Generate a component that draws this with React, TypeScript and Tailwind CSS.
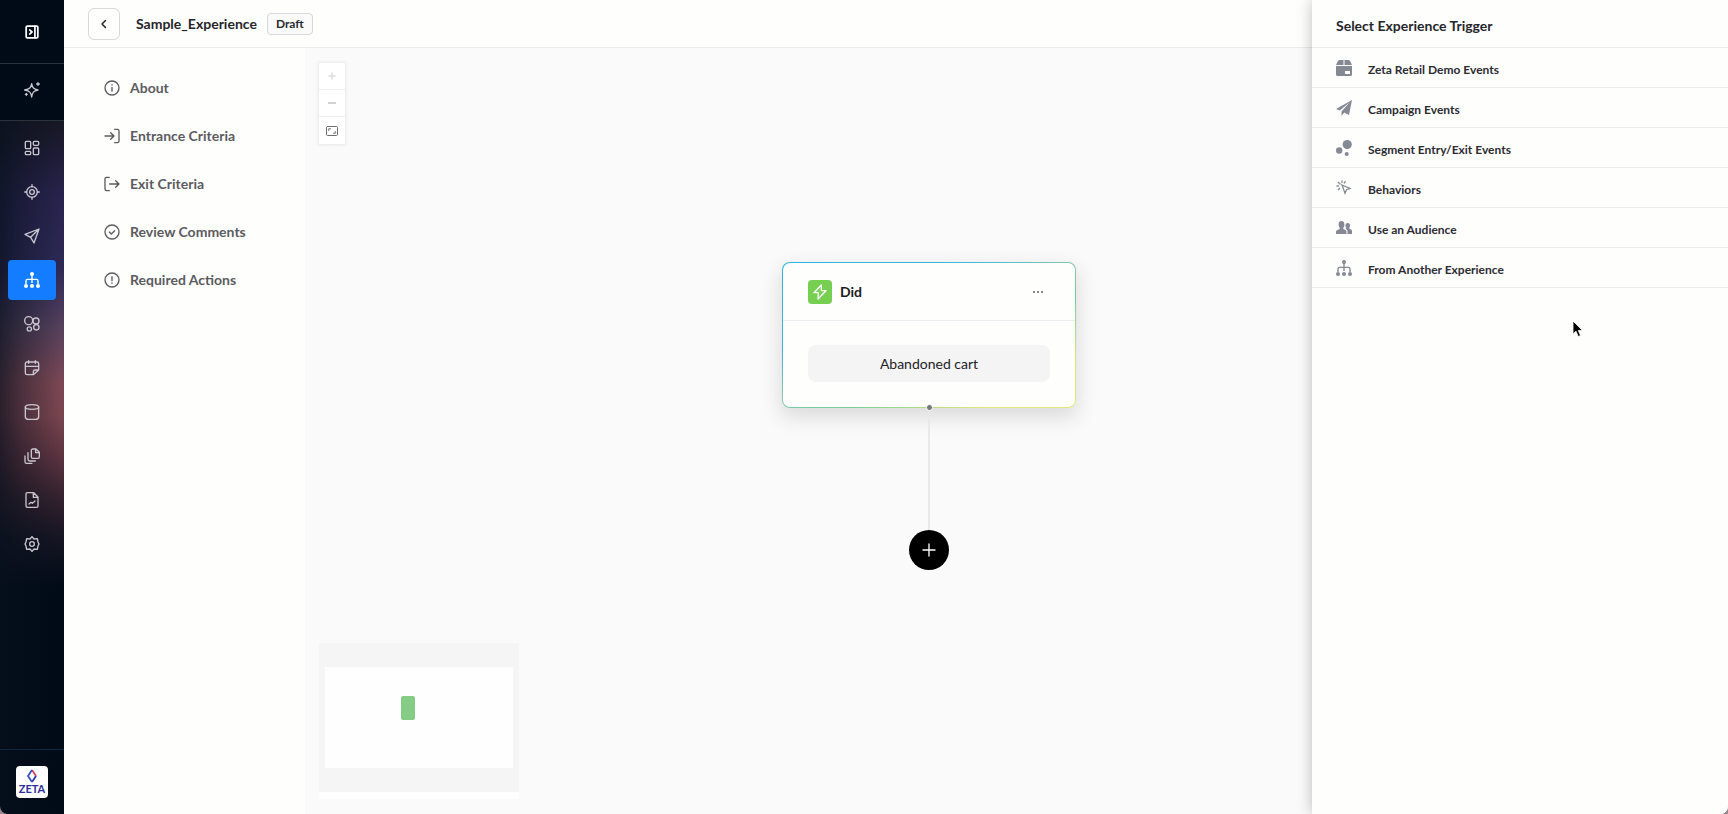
import type { ReactNode } from "react";
import clsx from "clsx";

function StrokeIcon({ children, className = "size-4", width = 1.5 }: { children: ReactNode; className?: string; width?: number }) {
  return (
    <svg viewBox="0 0 24 24" fill="none" stroke="currentColor" strokeWidth={width} strokeLinecap="round" strokeLinejoin="round" className={className} aria-hidden="true">
      {children}
    </svg>
  );
}

function FillIcon({ children, className = "size-4" }: { children: ReactNode; className?: string }) {
  return (
    <svg viewBox="0 0 16 16" fill="currentColor" className={className} aria-hidden="true">
      {children}
    </svg>
  );
}

const sitemap = (
  <>
    <circle cx="8" cy="2" r="2" />
    <path d="M8 3v8M2 12V9q0-1.600 1.600-1.600h8.800q1.600 0 1.600 1.600v3" fill="none" stroke="currentColor" strokeWidth="1.400" />
    <circle cx="2" cy="14" r="2" />
    <circle cx="8" cy="14" r="2" />
    <circle cx="14" cy="14" r="2" />
  </>
);

const railItems = [
  {
    label: "Dashboard",
    icon: (
      <StrokeIcon width={2}>
        <rect x="2" y="2" width="8" height="11" rx="1.500" />
        <rect x="14" y="2" width="8" height="6" rx="1.500" />
        <rect x="2" y="17" width="8" height="5" rx="1.500" />
        <rect x="14" y="12" width="8" height="10" rx="1.500" />
      </StrokeIcon>
    ),
  },
  {
    label: "Audiences",
    icon: (
      <StrokeIcon width={2}>
        <circle cx="12" cy="12" r="8" />
        <circle cx="12" cy="12" r="3.500" />
        <path d="M12 1v3M12 20v3M1 12h3M20 12h3" />
      </StrokeIcon>
    ),
  },
  {
    label: "Campaigns",
    icon: (
      <StrokeIcon width={2}>
        <path d="M22.500 1.500 1.500 9.500l8.500 4.500 5 8.500zM22.500 1.500 10 14" />
      </StrokeIcon>
    ),
  },
  { label: "Experiences", icon: <FillIcon>{sitemap}</FillIcon>, active: true },
  {
    label: "Segments",
    icon: (
      <StrokeIcon width={2}>
        <circle cx="7" cy="7" r="6" />
        <circle cx="18" cy="7.500" r="4.500" />
        <circle cx="18.500" cy="17" r="4" />
        <circle cx="8" cy="19.500" r="3.200" />
      </StrokeIcon>
    ),
  },
  {
    label: "Calendar",
    icon: (
      <StrokeIcon width={2}>
        <path d="M14 22H4.500A2.500 2.500 0 0 1 2 19.500v-14A2.500 2.500 0 0 1 4.500 3h15A2.500 2.500 0 0 1 22 5.500V15zM2 9.500h20M7 1v4M17 1v4M14 22v-4.500a2.500 2.500 0 0 1 2.500-2.500H22" />
      </StrokeIcon>
    ),
  },
  {
    label: "Data",
    icon: (
      <StrokeIcon width={2}>
        <ellipse cx="12" cy="4.500" rx="10" ry="3.500" />
        <path d="M2 4.500V19c0 2 2 4 5 4h10c3 0 5-2 5-4V4.500" />
      </StrokeIcon>
    ),
  },
  {
    label: "Content",
    icon: (
      <StrokeIcon width={2}>
        <path d="M18 1.500h-5a2 2 0 0 0-2 2v10a2 2 0 0 0 2 2h8a2 2 0 0 0 2-2v-7zM17.500 1.500v5.500H23M6 7v10a2.500 2.500 0 0 0 2.500 2.500H17M1.500 12v8.500A2.500 2.500 0 0 0 4 23h8" />
      </StrokeIcon>
    ),
  },
  {
    label: "Reports",
    icon: (
      <StrokeIcon width={2}>
        <path d="M14.500 1H5a2 2 0 0 0-2 2v18a2 2 0 0 0 2 2h14a2 2 0 0 0 2-2V7.500zM14 1v7h7M7.500 18l3-2.500 2 1.500 4-3.500" />
      </StrokeIcon>
    ),
  },
  {
    label: "Settings",
    icon: (
      <StrokeIcon width={2}>
        <path d="m12 1 3 3.500 5-.500 1 5 1.500 3-1.500 3-1 5-5-.500L12 23l-3-3.500-5 .500-1-5L1.500 12 3 9l1-5 5 .500z" />
        <circle cx="12" cy="12" r="3.500" />
      </StrokeIcon>
    ),
  },
];

const sections = [
  { label: "About", icon: <><circle cx="12" cy="12" r="10.500" /><path d="M12 11v6M12 7v.500" /></> },
  { label: "Entrance Criteria", icon: <path d="M1.500 12H15M10 7l5 5-5 5M16 2h4a2.500 2.500 0 0 1 2.500 2.500v15A2.500 2.500 0 0 1 20 22h-4" /> },
  { label: "Exit Criteria", icon: <path d="M8 2H4a2.500 2.500 0 0 0-2.500 2.500v15A2.500 2.500 0 0 0 4 22h4M8.500 12h14M17.500 7l5 5-5 5" /> },
  { label: "Review Comments", icon: <><circle cx="12" cy="12" r="10.500" /><path d="m8 12 3 3 5-5" /></> },
  { label: "Required Actions", icon: <><circle cx="12" cy="12" r="10.500" /><path d="M12 7v6M12 16.500v.500" /></> },
];

const triggers = [
  {
    label: "Zeta Retail Demo Events",
    icon: <path d="M3.500 0h4v5H0l1.800-3.800A2 2 0 0 1 3.500 0zM8.500 0h4a2 2 0 0 1 1.700 1.200L16 5H8.500zM0 6h16v8.500a1.500 1.500 0 0 1-1.500 1.500h-13A1.500 1.500 0 0 1 0 14.500zM9 11v3h5v-3z" fillRule="evenodd" />,
  },
  { label: "Campaign Events", icon: <path d="M16 0 0 9l3.800 1.600L14 2 5.500 11.500V16l2.700-3.400L13 15z" /> },
  { label: "Segment Entry/Exit Events", icon: <><circle cx="11.200" cy="4.600" r="4.600" /><circle cx="3.200" cy="10.500" r="3.200" /><circle cx="10.700" cy="14" r="2" /></> },
  {
    label: "Behaviors",
    icon: <path d="m6 5 8 3.500-3.500 1.200L9 13.300zM4.500 4.500 2 2M6 3V.500M3 6H.500M8 3.500 9.500 1M4 8l-2 2" fill="none" stroke="currentColor" strokeWidth="1.300" />,
  },
  {
    label: "Use an Audience",
    icon: <path d="M0 14v-2c0-1.500 1-2 2.500-2.500 1-.300 1.300-.600 1.300-1.500C3 7 2.600 6 2.600 4.500 2.600 2.500 3.500 1 5.500 1s2.900 1.500 2.900 3.500C8.400 6 8 7 7.200 8c0 .900.300 1.200 1.300 1.500 1.500.500 2 1 2 2.500v2zM11.500 14v-2.500c0-1.500-.700-2.300-2-2.800.500-.200.700-.500.700-1C9.700 7 9.500 6.500 9.500 5.500c0-1.700.900-2.500 2.300-2.500S14 3.800 14 5.500c0 1-.200 1.500-.800 2.200 0 .800.200 1 1 1.300 1.300.500 1.800 1 1.800 2.500V14z" />,
  },
  { label: "From Another Experience", icon: sitemap },
];

function Rail() {
  return (
    <aside className="flex w-16 shrink-0 flex-col bg-[linear-gradient(90deg,#07101cb3,#07101c66_35%,#07101c00_95%),linear-gradient(180deg,#171724_15%,#28234d_24%,#2d2956_33%,#54405c_40%,#7b4753_47%,#7a454f_51%,#5c3440_56%,#35222f_61%,#161523_66%,#010b17_72%)] text-[#c8c6d0]">
      <div className="flex h-16 items-center justify-center border-b border-[#2b333d] bg-[#010b17] text-white">
        <button aria-label="Expand menu">
          <StrokeIcon width={3} className="size-3.5">
            <rect x="2" y="2" width="20" height="20" rx="2" />
            <path d="M17 2v20M8 8.500l4 3.500-4 3.500" />
          </StrokeIcon>
        </button>
      </div>
      <div className="flex h-[57px] items-center justify-center border-b border-[#2b333d] bg-[#010b17] pb-1">
        <button aria-label="Assistant">
          <StrokeIcon width={2}>
            <path d="M11.500 2.500c1 6 3 8 9.500 9.500-6.500 1.500-8.500 3.500-9.500 10.500C10.500 15.500 8.500 13.500 1 12c7.500-1.500 9.500-3.500 10.500-9.500zM21 1v4M19 3h4M3.500 17v3M2 18.500h3" />
          </StrokeIcon>
        </button>
      </div>
      <nav className="flex flex-col gap-1 px-2 py-[7px]">
        {railItems.map((item) => (
          <button
            key={item.label}
            aria-label={item.label}
            className={clsx("flex h-10 items-center justify-center rounded", item.active && "bg-[#147dff] text-white")}
          >
            {item.icon}
          </button>
        ))}
      </nav>
      <div className="mt-auto flex h-[65px] items-center justify-center border-t border-[#12263c]">
        <div className="flex size-8 flex-col items-center justify-center rounded bg-white">
          <svg viewBox="0 0 12 14" fill="none" strokeWidth="1.800" className="h-3.5 w-3" aria-hidden="true">
            <path d="m6 1 4 6" stroke="#d9475b" />
            <path d="m10 7-4 6" stroke="#2a3aa8" />
            <path d="M6 13 2 7l4-6" stroke="#3552c4" />
          </svg>
          <span className="text-[11px] leading-3 font-bold text-[#2d2f9b]">ZETA</span>
        </div>
      </div>
    </aside>
  );
}

function ZoomControls() {
  return (
    <div className="absolute top-[15px] left-[14px] flex w-[26px] flex-col divide-y divide-[#eeeef0] bg-white text-[#6c6c70] shadow-[0_0_3px_1px_#00000014]">
      <button aria-label="Zoom in" className="flex h-[27px] items-center justify-center text-[#cfcfd2]">
        <StrokeIcon width={3} className="size-2"><path d="M12 2v20M2 12h20" /></StrokeIcon>
      </button>
      <button aria-label="Zoom out" className="flex h-[27px] items-center justify-center text-[#a5a5a8]">
        <StrokeIcon width={3} className="size-2"><path d="M1 12h22" /></StrokeIcon>
      </button>
      <button aria-label="Fit view" className="flex h-[27px] items-center justify-center">
        <StrokeIcon width={2} className="size-3">
          <rect x="1" y="3" width="22" height="18" rx="2" />
          <path d="M5.500 11V7.500H9M18.500 13v3.500H15" />
        </StrokeIcon>
      </button>
    </div>
  );
}

function TriggerNode() {
  return (
    <div className="absolute top-[214px] left-[477px] flex w-[294px] flex-col items-center">
      <div className="w-full rounded-lg bg-[linear-gradient(155deg,#2cb3e0_0%,#3db6d8_30%,#86c5b0_48%,#74cf98_62%,#e2e878_85%)] p-px shadow-[0_8px_20px_2px_#0000001f]">
        <div className="rounded-[7px] bg-[#fefefd]">
          <div className="flex h-[58px] items-center gap-2 border-b border-[#eeeef2] px-[25px]">
            <span className="flex size-6 items-center justify-center rounded bg-[#76cf50] text-white">
              <StrokeIcon width={2}>
                <path d="M14 1.500 3 13h6.500L9 22.500 21 10h-7z" />
              </StrokeIcon>
            </span>
            <h2 className="text-sm font-bold text-[#1c1c22]">Did</h2>
            <button aria-label="More" className="ml-auto flex w-6 items-center justify-center text-[#5d5d62]">
              <svg viewBox="0 0 10 2" fill="currentColor" className="h-0.5 w-2.5" aria-hidden="true">
                <circle cx="1" cy="1" r="1" />
                <circle cx="5" cy="1" r="1" />
                <circle cx="9" cy="1" r="1" />
              </svg>
            </button>
          </div>
          <div className="px-[25px] pt-6 pb-[25px]">
            <button className="block h-[37px] w-full rounded-lg bg-[#f4f4f5] text-sm text-[#222227]">Abandoned cart</button>
          </div>
        </div>
      </div>
      <span className="relative -mt-1 size-[7px] rounded-full border border-white bg-[#77777b]" />
      <span className="h-[119px] w-0.5 bg-[#e9e9eb]" />
      <button aria-label="Add step" className="flex size-10 items-center justify-center rounded-full bg-black text-white">
        <StrokeIcon width={2}><path d="M12 3v18M3 12h18" /></StrokeIcon>
      </button>
    </div>
  );
}

function MiniMap() {
  return (
    <div className="absolute bottom-[15px] left-[14px] w-[200px] border-b-[7px] border-[#fefefe] bg-[#f5f5f5] px-1.5 py-6">
      <div className="relative h-[101px] bg-[#fefefe]">
        <span className="absolute top-[29px] left-[76px] h-6 w-3.5 rounded-[2px] bg-[#84cb85]" />
      </div>
    </div>
  );
}

function TriggerPanel() {
  return (
    <aside className="absolute inset-y-0 right-0 w-[416px] bg-[#fefefd] shadow-[0_0_14px_#00000042]">
      <h2 className="flex h-12 items-center border-b border-[#ececee] px-6 pt-1 text-sm font-bold text-[#25252b]">Select Experience Trigger</h2>
      <ul>
        {triggers.map((trigger) => (
          <li key={trigger.label} className="border-b border-[#ececee]">
            <button className="flex h-[39px] w-full items-center gap-4 px-6 text-left text-xs font-bold text-[#2b2b31]">
              <span className="text-[#858994]"><FillIcon>{trigger.icon}</FillIcon></span>
              <span className="pt-1">{trigger.label}</span>
            </button>
          </li>
        ))}
      </ul>
      <svg viewBox="0 0 12 18" className="absolute top-[320px] left-[260px] h-[18px] w-3" aria-hidden="true">
        <path d="M1 1v13l3-2.800 2.200 5.300 2.300-1L6.300 10.500h4.200z" fill="#000" stroke="#fff" strokeWidth="0.800" />
      </svg>
    </aside>
  );
}

export default function App() {
  return (
    <div className="h-screen bg-[#9b858e] font-['Lato','Liberation_Sans',sans-serif]">
      <div className="relative flex h-full overflow-hidden rounded-b-lg bg-[#fefefd]">
        <Rail />
        <div className="flex min-w-0 flex-1 flex-col">
          <header className="flex h-12 shrink-0 items-center border-b border-[#ececee] px-6">
            <button aria-label="Back" className="flex size-8 items-center justify-center rounded-md border border-[#d9d9dc] text-[#222227]">
              <StrokeIcon width={3} className="size-3"><path d="m15 5-7 7 7 7" /></StrokeIcon>
            </button>
            <h1 className="ml-4 text-sm font-bold text-[#25252b]">Sample_Experience</h1>
            <span className="ml-2.5 rounded border border-[#d9d9dc] bg-[#fafafb] px-2 text-xs leading-5 font-bold text-[#2b2b31]">Draft</span>
          </header>
          <div className="flex min-h-0 flex-1">
            <nav className="flex w-[241px] shrink-0 flex-col pt-4">
              {sections.map((section) => (
                <a key={section.label} href="#" className="flex h-12 items-center gap-2.5 px-10 text-sm font-bold text-[#5b5b5f]">
                  <StrokeIcon width={2}>{section.icon}</StrokeIcon>
                  {section.label}
                </a>
              ))}
            </nav>
            <main className="relative min-w-0 flex-1 overflow-hidden bg-[#fafafa]">
              <ZoomControls />
              <TriggerNode />
              <MiniMap />
            </main>
          </div>
        </div>
        <TriggerPanel />
      </div>
    </div>
  );
}
